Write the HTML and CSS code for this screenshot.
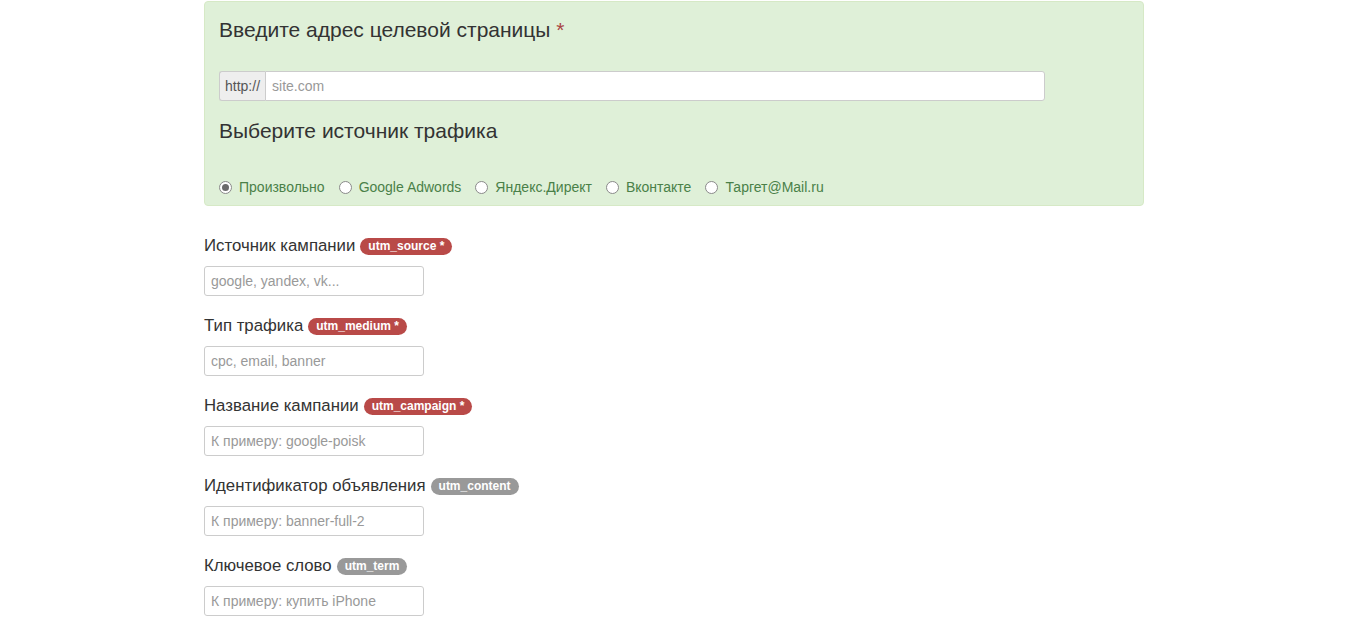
FILE: index.html
```html
<!DOCTYPE html>
<html lang="ru">
<head>
    <meta charset="UTF-8">
    <title>UTM-метки</title>
    <link rel="stylesheet" href="styles.css">
</head>
<body>
    <div class="container">
        <div class="target-box">
            <h3>Введите адрес целевой страницы <span class="req">*</span></h3>
            <div class="input-group">
                <span class="addon">http://</span>
                <input type="text" class="url" placeholder="site.com">
            </div>
            <h3>Выберите источник трафика</h3>
            <div class="sources">
                <label><input type="radio" name="src" checked> Произвольно</label>
                <label><input type="radio" name="src"> Google Adwords</label>
                <label><input type="radio" name="src"> Яндекс.Директ</label>
                <label><input type="radio" name="src"> Вконтакте</label>
                <label><input type="radio" name="src"> Таргет@Mail.ru</label>
            </div>
        </div>

        <div class="field">
            <label>Источник кампании <span class="badge red">utm_source *</span></label>
            <input type="text" placeholder="google, yandex, vk...">
        </div>
        <div class="field">
            <label>Тип трафика <span class="badge red">utm_medium *</span></label>
            <input type="text" placeholder="cpc, email, banner">
        </div>
        <div class="field">
            <label>Название кампании <span class="badge red">utm_campaign *</span></label>
            <input type="text" placeholder="К примеру: google-poisk">
        </div>
        <div class="field">
            <label>Идентификатор объявления <span class="badge">utm_content</span></label>
            <input type="text" placeholder="К примеру: banner-full-2">
        </div>
        <div class="field">
            <label>Ключевое слово <span class="badge">utm_term</span></label>
            <input type="text" placeholder="К примеру: купить iPhone">
        </div>
    </div>
</body>
</html>
```

FILE: styles.css
```css
body {
    margin: 0;
    font-family: "Liberation Sans", Arial, sans-serif;
    font-size: 14px;
    color: #333;
    background: #fff;
}

.container {
    width: 940px;
    margin-left: calc(50% - 473px);
    padding-top: 1px;
}

.target-box {
    background-color: #dff0d8;
    border: 1px solid #d6e9c6;
    border-radius: 4px;
    padding: 17px 14px 8px;
    color: #3c763d;
}

.target-box h3 {
    font-size: 21px;
    font-weight: normal;
    line-height: 22px;
    margin: 0;
    color: #333;
}

.req {
    color: #a94442;
}

.input-group {
    display: flex;
    width: 826px;
    height: 30px;
    margin: 30px 0 19px;
}

.addon {
    display: flex;
    align-items: center;
    padding: 0 5px;
    background: #eee;
    border: 1px solid #ccc;
    border-right: none;
    border-radius: 3px 0 0 3px;
    color: #555;
    font-size: 14px;
}

.input-group .url {
    flex: 1;
    height: 30px;
    border-radius: 0 3px 3px 0;
}

input[type="text"] {
    box-sizing: border-box;
    height: 30px;
    padding: 0 6px;
    border: 1px solid #ccc;
    border-radius: 3px;
    font-family: inherit;
    font-size: 14px;
    color: #555;
    background: #fff;
    outline: none;
}

input::placeholder {
    color: #999;
}

.sources {
    display: flex;
    gap: 14px;
    margin-top: 35px;
    line-height: 20px;
}

.sources label {
    display: flex;
    align-items: center;
    gap: 7px;
    color: #4a8048;
}

.sources input[type="radio"] {
    appearance: none;
    width: 13px;
    height: 13px;
    margin: 0;
    border: 1px solid #8a8a8a;
    border-radius: 50%;
    background: #fff;
    display: grid;
    place-content: center;
}

.sources input[type="radio"]:checked::before {
    content: "";
    width: 7px;
    height: 7px;
    border-radius: 50%;
    background: #6b6b6b;
}

.field {
    margin-top: 29px;
}

.field + .field {
    margin-top: 19px;
}

.field label {
    display: flex;
    align-items: center;
    gap: 5px;
    font-size: 16.8px;
    line-height: 22px;
    margin-bottom: 9px;
}

.field input {
    width: 220px;
    display: block;
}

.badge {
    display: inline-block;
    padding: 0 8px;
    height: 17px;
    line-height: 17px;
    border-radius: 9px;
    background: #999;
    color: #fff;
    font-size: 12px;
    font-weight: bold;
}

.badge.red {
    background: #b94a48;
}
```
